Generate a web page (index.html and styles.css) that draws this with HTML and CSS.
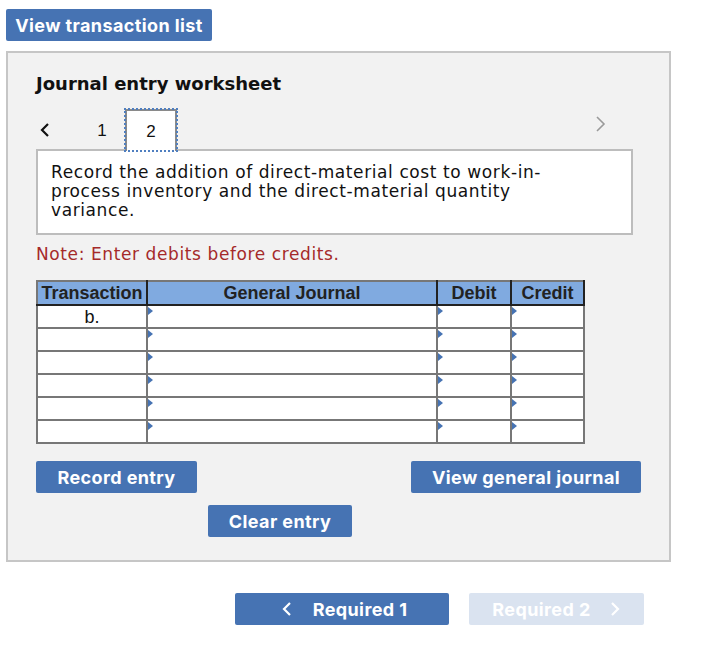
FILE: index.html
```html
<!DOCTYPE html>
<html>
<head>
<meta charset="utf-8">
<link rel="stylesheet" href="styles.css">
</head>
<body>
<div class="page">
  <button class="btn btn-top">View transaction list</button>
  <div class="panel">
    <h2 class="title">Journal entry worksheet</h2>
    <div class="tabs">
      <span class="chev chev-left"><svg width="12" height="16" viewBox="0 0 12 16"><path d="M9 2 L3 8 L9 14" fill="none" stroke="#111" stroke-width="2.2"/></svg></span>
      <span class="tab">1</span>
      <span class="tab tab-active">2</span>
      <span class="spacer"></span>
      <span class="chev chev-right"><svg width="12" height="18" viewBox="0 0 12 18"><path d="M2 2 L9 9 L2 16" fill="none" stroke="#9a9a9a" stroke-width="1.6"/></svg></span>
    </div>
    <div class="desc">Record the addition of direct-material cost to work-in-process inventory and the direct-material quantity variance.</div>
    <p class="note">Note: Enter debits before credits.</p>
    <table class="journal">
      <colgroup><col class="c1"><col class="c2"><col class="c3"><col class="c4"></colgroup>
      <thead>
        <tr><th>Transaction</th><th>General Journal</th><th>Debit</th><th>Credit</th></tr>
      </thead>
      <tbody>
        <tr><td class="tx">b.</td><td class="in"></td><td class="in"></td><td class="in"></td></tr>
        <tr><td class="tx"></td><td class="in"></td><td class="in"></td><td class="in"></td></tr>
        <tr><td class="tx"></td><td class="in"></td><td class="in"></td><td class="in"></td></tr>
        <tr><td class="tx"></td><td class="in"></td><td class="in"></td><td class="in"></td></tr>
        <tr><td class="tx"></td><td class="in"></td><td class="in"></td><td class="in"></td></tr>
        <tr><td class="tx"></td><td class="in"></td><td class="in"></td><td class="in"></td></tr>
      </tbody>
    </table>
    <div class="actions">
      <button class="btn btn-record">Record entry</button>
      <button class="btn btn-view">View general journal</button>
    </div>
    <div class="actions2">
      <button class="btn btn-clear">Clear entry</button>
    </div>
  </div>
  <div class="nav">
    <button class="btn btn-req1"><svg width="12" height="16" viewBox="0 0 12 16"><path d="M9 2 L3 8 L9 14" fill="none" stroke="#fff" stroke-width="2.2"/></svg><span>Required 1</span></button>
    <button class="btn btn-req2"><span>Required 2</span><svg width="12" height="16" viewBox="0 0 12 16"><path d="M3 2 L9 8 L3 14" fill="none" stroke="#fff" stroke-width="2.2"/></svg></button>
  </div>
</div>
</body>
</html>
```

FILE: styles.css
```css
* { box-sizing: border-box; }
body { margin: 0; background: #fff; }
.page { padding: 9px 0 0 6px; }
.btn {
  font-family: Inter, "Liberation Sans", sans-serif;
  font-weight: 700;
  font-size: 18px;
  letter-spacing: 0.4px;
  color: #fff;
  background: #4673b3;
  border: none;
  border-radius: 2px;
  height: 32px;
  padding: 0;
  display: flex;
  align-items: center;
  justify-content: center;
  cursor: pointer;
}
.btn-top { width: 206px; }
.panel {
  margin-top: 10px;
  width: 665px;
  height: 511px;
  border: 2px solid #c6c6c6;
  background: #f2f2f2;
  padding: 0 28px;
}
.title {
  font-family: "DejaVu Sans", Verdana, sans-serif;
  font-weight: 700;
  font-size: 18px;
  margin: 21px 0 0 0;
  color: #111;
  line-height: 20px;
}
.tabs {
  display: flex;
  align-items: flex-end;
  height: 57px;
  position: relative;
  z-index: 1;
  margin-bottom: -2px;
}
.chev { display: flex; align-items: center; height: 42px; }
.chev-left { margin-left: 3px; width: 45px; }
.tab {
  font-family: "Liberation Sans", Arial, sans-serif;
  font-size: 17px;
  color: #111;
  height: 42px;
  display: flex;
  align-items: center;
  justify-content: center;
  width: 36px;
  padding-top: 2px;
}
.tab-active {
  width: 52px;
  margin-left: 5px;
  background: #fff;
  border: 2px solid #8a8a8a;
  border-bottom: none;
  outline: 2px dotted #4f7fc0;
  outline-offset: -1px;
}
.spacer { flex: 1; }
.chev-right { margin-right: 34px; height: 44px; align-items: flex-start; padding-top: 8px; }
.desc {
  width: 597px;
  background: #fff;
  border: 2px solid #bdbdbd;
  font-family: "DejaVu Sans", Verdana, sans-serif;
  font-size: 17px;
  letter-spacing: 0.6px;
  line-height: 19px;
  color: #111;
  padding: 12px 40px 12px 13px;
  height: 86px;
}
.note {
  font-family: "DejaVu Sans", Verdana, sans-serif;
  font-size: 17px;
  letter-spacing: 0.6px;
  color: #a52a2a;
  margin: 8px 0 0 0;
  line-height: 22px;
}
.journal {
  margin-top: 15px;
  border-collapse: collapse;
  width: 547px;
  table-layout: fixed;
  font-family: "Liberation Sans", Arial, sans-serif;
  border: 2px solid #777;
}
.c1 { width: 110px; }
.c2 { width: 290px; }
.c3 { width: 74px; }
.c4 { width: 73px; }
.journal th {
  background: #80aae0;
  color: #222;
  font-size: 18px;
  font-weight: 700;
  height: 24px;
  padding: 0;
  border: 2px solid #222;
  border-top-color: #777;
  line-height: 20px;
  white-space: nowrap;
  overflow: visible;
}
.journal th:first-child { border-left-color: #777; }
.journal td {
  background: #fff;
  height: 23px;
  border: 2px solid #777;
  padding: 0;
  font-size: 18px;
  line-height: 20px;
  color: #111;
  position: relative;
}
.journal td.tx { text-align: center; }
.journal td.in::before {
  content: "";
  position: absolute;
  left: 0;
  top: 1px;
  border-left: 5px solid #4673b3;
  border-top: 4px solid transparent;
  border-bottom: 4px solid transparent;
}
.actions {
  display: flex;
  justify-content: space-between;
  width: 605px;
  margin-top: 17px;
}
.btn-record { width: 161px; }
.btn-view { width: 230px; }
.actions2 { margin-top: 12px; padding-left: 172px; }
.btn-clear { width: 144px; }
.nav {
  display: flex;
  gap: 20px;
  margin-top: 31px;
  padding-left: 229px;
}
.btn-req1 { width: 214px; gap: 20px; padding-left: 4px; }
.btn-req2 { width: 175px; gap: 18px; background: #dae3f0; }
```
